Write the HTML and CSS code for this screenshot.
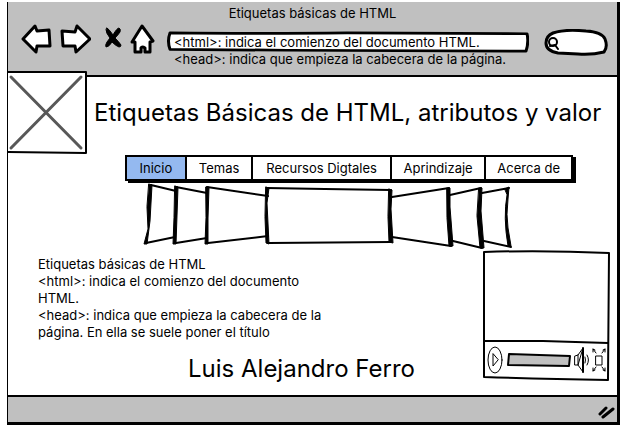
FILE: index.html
```html
<!DOCTYPE html>
<html lang="es">
<head>
<meta charset="utf-8">
<meta name="viewport" content="width=device-width, initial-scale=1">
<title>Etiquetas básicas de HTML</title>
<link rel="stylesheet" href="styles.css">
</head>
<body>
<div class="window">
  <header class="chrome">
    <p class="chrome-title">Etiquetas básicas de HTML</p>
    <div class="toolbar">
      <div class="tools">
        <button class="tool" type="button" aria-label="Atrás">
          <svg width="31" height="30" viewBox="0 0 31 30"><path d="M2 15 L14 2 L16 7 L28 6 L29 22 L16 22 L15 28 Z"/></svg>
        </button>
        <button class="tool" type="button" aria-label="Adelante">
          <svg width="31" height="30" viewBox="0 0 31 30"><path d="M2 7 L15 8 L17 2 L30 15 L16 28 L15 22 L3 22 Z"/></svg>
        </button>
        <button class="tool tool-stop" type="button" aria-label="Detener">
          <svg width="18" height="22" viewBox="0 0 18 22"><path class="ink" d="M3 1 Q5 2 9 8 Q13 1 15 1 Q17 2 16 5 Q14 8 11 11 Q15 15 17 18 Q17 20 15 20 Q12 19 8 15 Q5 20 2 20 Q1 18 3 15 L6 11 Q2 6 2 3 Z"/></svg>
        </button>
        <button class="tool" type="button" aria-label="Inicio">
          <svg width="25" height="30" viewBox="0 0 25 30"><path d="M12 2 L23 17 L20 18 L20 28 L15 28 L15 24 Q12 22 11 24 L11 28 L5 28 L5 18 L2 18 Z"/></svg>
        </button>
      </div>
      <div class="address">
        <div class="field">
          <svg class="frame" viewBox="0 0 362 24" preserveAspectRatio="none"><path d="M3 2 Q100 3 180 2 L360 3 Q362 12 359 22 L120 21 L3 20 Q0 11 3 2 Z"/></svg>
          <input class="field-input" type="text" aria-label="Dirección" value="&lt;html&gt;: indica el comienzo del documento HTML.">
        </div>
        <p class="overflow-line">&lt;head&gt;: indica que empieza la cabecera de la página.</p>
      </div>
      <div class="search">
        <svg class="frame" viewBox="0 0 64 27" preserveAspectRatio="none"><path d="M9 4 Q20 0 42 2 Q58 3 61 10 Q64 18 60 23 Q48 26 34 25 L14 24 Q2 22 2 14 Q2 7 9 4 Z"/></svg>
        <svg class="lens" width="12" height="13" viewBox="0 0 12 13"><circle cx="5" cy="5" r="4"/><path d="M2 9 L7 8 L10 12"/></svg>
        <input class="search-input" type="search" aria-label="Buscar">
      </div>
    </div>
  </header>

  <main class="page">
    <div class="banner">
      <svg class="logo" width="80" height="83" viewBox="0 0 80 83" role="img" aria-label="Logotipo"><path class="logo-box" d="M0 1 L78 1 L78 82 L0 81"/><path class="logo-cross" d="M3 6 L73 77 M73 6 L3 77"/></svg>
      <h1 class="title">Etiquetas Básicas de HTML, atributos y valor</h1>
    </div>

    <nav class="menu" aria-label="Principal">
      <a class="menu-item current" href="#inicio" aria-current="page">Inicio</a>
      <a class="menu-item" href="#temas">Temas</a>
      <a class="menu-item" href="#recursos">Recursos Digtales</a>
      <a class="menu-item" href="#aprendizaje">Aprindizaje</a>
      <a class="menu-item" href="#acerca">Acerca de</a>
    </nav>

    <svg class="carousel" width="368" height="67" viewBox="0 0 368 67" role="img" aria-label="Carrusel de imágenes">
      <path class="thin" d="M6 2 L31 8 M1 60 L30 54 M31 4 L62 10 M31 60 L62 55 M62 4 L123 13 M63 60 L123 53"/>
      <path class="thin" d="M122 5 L180 6 L246 7 M124 60 L246 59 M247 14 L304 5 M247 54 L306 63 M305 12 L336 5 M308 58 L337 65 M337 10 L364 5 M339 58 L366 64"/>
      <path class="ink" d="M4 1 L7 2 L6 20 L5 38 L2 61 L-1 61 L3 46 L2 24 Z M30 3 L33 4 L31 61 L28 61 L29 35 Z M61 4 L64 4 L63 35 L63 61 L60 61 L61 35 Z M121 4 L124 5 L122 20 L124 61 L121 60 L120 34 Z"/>
      <path class="ink" d="M244 6 L247 7 L246 26 L248 60 L244 59 L243 34 Z M302 5 L305 5 L305 24 L308 63 L304 63 L302 35 Z M334 5 L337 5 L336 28 L339 65 L335 65 L332 33 Z M360 6 L364 4 L363 16 Q361 32 363 45 L366 63 L363 63 Q358 34 362 12 Z"/>
    </svg>

    <div class="content">
      <div class="story">
        <p class="text">Etiquetas básicas de HTML<br>&lt;html&gt;: indica el comienzo del documento HTML.<br>&lt;head&gt;: indica que empieza la cabecera de la página. En ella se suele poner el título</p>
        <h2 class="author">Luis Alejandro Ferro</h2>
      </div>
      <section class="player" aria-label="Vídeo">
        <svg class="frame" viewBox="0 0 127 131" preserveAspectRatio="none"><path class="thin" d="M1 2 Q60 0 126 3 L125 130 Q60 129 1 127 Z M1 91 L60 91 L125 93"/></svg>
        <div class="controls">
          <button class="tool" type="button" aria-label="Reproducir">
            <svg class="fine" width="17" height="28" viewBox="0 0 17 28"><ellipse cx="8" cy="14" rx="7" ry="13"/><path class="hair" d="M6 8 L6 20 L11 14 Z"/></svg>
          </button>
          <div class="seek">
            <svg class="frame" viewBox="0 0 64 14" preserveAspectRatio="none"><path class="fill" d="M2 1 Q30 2 63 3 L62 13 L1 12 Z"/></svg>
            <input class="seek-input" type="range" aria-label="Posición" value="0">
          </div>
          <button class="tool" type="button" aria-label="Volumen">
            <svg class="fine" width="15" height="26" viewBox="0 0 15 26"><path class="hair" d="M1 9 L4 8 L9 1 L4 18 L1 18 Z M4 8 L4 18 L9 25"/><path d="M9 1 L9 25"/><path class="hair" d="M11 10 Q12 13 11 16 M13 8 Q16 13 13 18"/></svg>
          </button>
          <button class="tool" type="button" aria-label="Pantalla completa">
            <svg class="fine" width="14" height="26" viewBox="0 0 14 26"><path class="hair" d="M4 9 L10 9 L10 18 L4 18 Z M1 2 L4 6 M10 6 L13 2 M4 20 L1 24 M10 20 L13 24 M1 5 L1 2 L3 3 M11 3 L13 2 L13 5 M1 21 L1 24 L3 23 M11 23 L13 24 L13 21"/></svg>
          </button>
        </div>
      </section>
    </div>
  </main>

  <footer class="status">
    <svg class="grip" width="17" height="14" viewBox="0 0 17 14"><path d="M2 9 L8 3 M5 12 L15 4"/></svg>
  </footer>
</div>
</body>
</html>
```
FILE: styles.css
```css
* {
  box-sizing: border-box;
}

body {
  margin: 2px 6px 3px 7px;
  background: #fff;
  color: #000;
  font-family: Inter, "Open Sans", sans-serif;
  font-size: 13px;
}

p,
h1,
h2 {
  margin: 0;
  font-weight: 400;
}

.window {
  border: solid #000;
  border-width: 0 3px 3px 1px;
}

/* Browser chrome */
.chrome {
  padding-bottom: 9px;
  border-bottom: 2px solid #000;
  background: #c0c0c0;
}

.chrome-title {
  line-height: 22px;
  text-align: center;
}

.toolbar {
  display: flex;
  align-items: flex-start;
  gap: 12px;
  padding: 0 9px 0 13px;
}

.tools {
  display: flex;
  align-items: center;
  gap: 8px;
}

.tool {
  display: block;
  padding: 0;
  border: 0;
  background: none;
}

.tool-stop {
  margin: 0 0 3px 5px;
}

svg {
  display: block;
  fill: #fff;
  stroke: #000;
  stroke-width: 3px;
  stroke-linejoin: round;
  stroke-linecap: round;
}

.ink {
  fill: #000;
  stroke-width: 1px;
}

.thin {
  stroke-width: 2px;
}

.frame {
  position: absolute;
  inset: 0;
  width: 100%;
  height: 100%;
}

.address {
  flex: 1;
  margin-top: 7px;
}

.field,
.search,
.seek,
.player {
  position: relative;
}

.field-input,
.search-input {
  position: relative;
  display: block;
  width: 100%;
  height: 22px;
  border: 0;
  outline: 0;
  background: none;
  color: inherit;
  font: inherit;
}

.field-input {
  padding: 0 7px;
}

.overflow-line {
  padding-left: 7px;
  line-height: 13px;
}

.search {
  width: 64px;
  height: 27px;
  margin: 5px 0 0 3px;
}

.search-input {
  padding: 0 8px 0 20px;
}

.lens {
  position: absolute;
  top: 8px;
  left: 4px;
  fill: none;
  stroke-width: 2px;
}

/* Page */
.banner {
  display: flex;
  align-items: center;
  gap: 6px;
  margin-top: -6px;
}

.logo {
  position: relative;
  flex: none;
}

.logo-box {
  stroke-width: 2px;
}

.logo-cross {
  stroke: #585858;
}

.title {
  font-size: 24px;
  line-height: 32px;
  white-space: nowrap;
}

.menu {
  display: grid;
  grid-template-columns: 58fr 67fr 139fr 95fr 87fr;
  margin: 1px 44px 0 117px;
  border: 2px solid #000;
  box-shadow: 3px 2px 0 #000;
}

.menu-item {
  color: inherit;
  line-height: 22px;
  text-align: center;
  text-decoration: none;
  white-space: nowrap;
}

.menu-item + .menu-item {
  border-left: 2px solid #000;
}

.current {
  background: #94b9f0;
}

.carousel {
  margin: 2px 0 0 137px;
  overflow: visible;
}

.content {
  display: flex;
  justify-content: space-between;
  padding: 0 7px 10px 30px;
}

.story {
  flex: 1;
}

.text {
  max-width: 300px;
  padding-top: 6px;
  line-height: 17px;
}

.author {
  margin-top: 12px;
  padding-left: 82px;
  font-size: 24px;
  line-height: 32px;
  text-align: center;
}

.player {
  display: flex;
  align-items: flex-end;
  width: 127px;
  height: 131px;
}

.controls {
  position: relative;
  display: flex;
  flex: 1;
  align-items: center;
  gap: 3px;
  padding: 0 4px 7px 4px;
}

.fine {
  fill: none;
  stroke-width: 2px;
}

.fine ellipse,
.fine .hair {
  stroke-width: 1px;
}

.seek {
  flex: 1;
  height: 14px;
}

.fill {
  fill: #c0c0c0;
  stroke-width: 2px;
}

.seek-input {
  position: relative;
  display: block;
  width: 100%;
  height: 100%;
  margin: 0;
  opacity: 0;
}

/* Status bar */
.status {
  display: flex;
  align-items: center;
  justify-content: flex-end;
  height: 27px;
  padding: 4px 2px 0 0;
  border-top: 2px solid #000;
  background: #c0c0c0;
}
```
